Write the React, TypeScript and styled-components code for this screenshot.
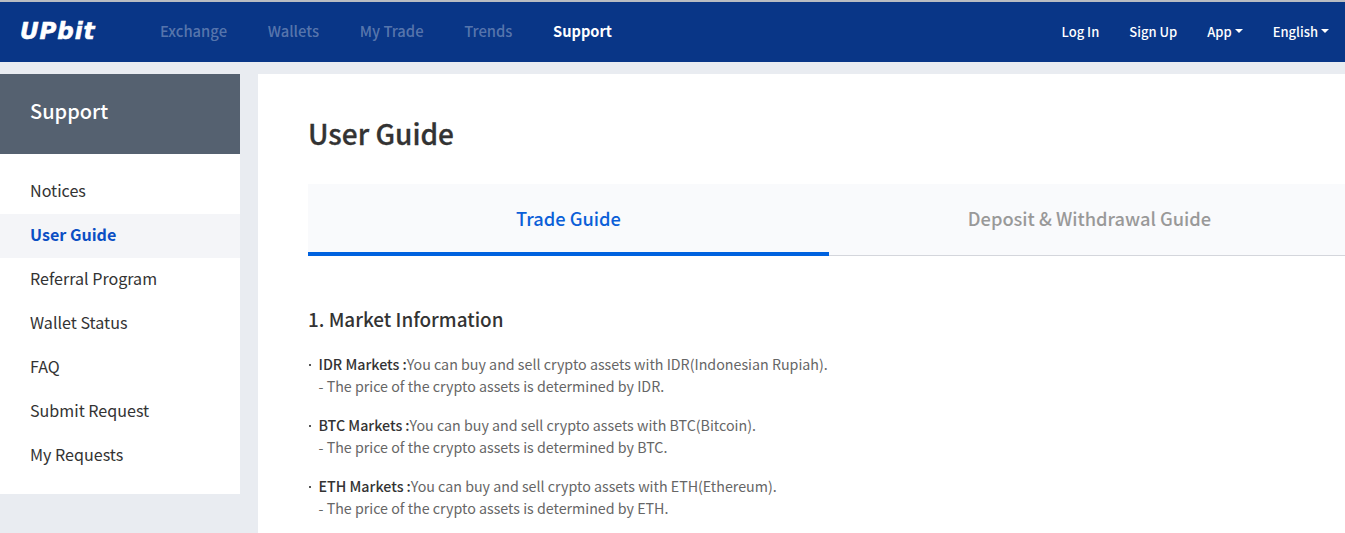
import React from 'react';
import styled, { createGlobalStyle } from 'styled-components';

const GlobalStyle = createGlobalStyle`
  html, body {
    margin: 0;
    padding: 0;
    height: 533px;
    overflow: hidden;
    background: #e9ecf1;
    font-family: "Noto Sans CJK KR", "Noto Sans", sans-serif;
  }
  * { box-sizing: border-box; }
`
const Page = styled.div`
  width: 1345px;
  height: 533px;
  overflow: hidden;
  border-top: 2px solid #b9bcc2;
`
const Header = styled.header`
  height: 60px;
  background: #093687;
  display: flex;
  align-items: center;
  justify-content: space-between;
  padding: 0 16px 2px 20px;
`
const Left = styled.div`
  display: flex;
  align-items: center;
`
const Logo = styled.div`
  width: 140px;
  color: #fff;
  font-family: "DejaVu Sans", sans-serif;
  font-size: 23px;
  font-weight: 700;
  font-style: italic;
  letter-spacing: 0.9px;
  -webkit-text-stroke: 0.6px #fff;
`
const MainNav = styled.nav`
  display: flex;
  gap: 40.7px;
`
const MainLink = styled.a<{ $active?: boolean }>`
  font-size: ${p => (p.$active ? '14.6px' : '14.8px')};
  line-height: 22px;
  font-weight: ${p => (p.$active ? 700 : 500)};
  color: ${p => (p.$active ? '#fff' : 'rgba(255, 255, 255, 0.33)')};
`
const UserNav = styled.nav`
  display: flex;
  align-items: center;
  gap: 30px;
`
const UserLink = styled.a`
  font-size: 13px;
  font-weight: 500;
  color: #fff;
  display: flex;
  align-items: center;
  gap: 3px;
`
const Caret = styled.span`
  width: 0;
  height: 0;
  border-left: 4px solid transparent;
  border-right: 4px solid transparent;
  border-top: 4px solid #fff;
`
const Body = styled.div`
  display: flex;
  align-items: flex-start;
  gap: 18px;
  padding-top: 12px;
`
const Sidebar = styled.aside`
  width: 240px;
  flex: none;
  background: #fff;
`
const SideTitle = styled.div`
  height: 80px;
  background: #556170;
  color: #fff;
  font-size: 20px;
  font-weight: 500;
  line-height: 74px;
  padding-left: 30px;
`
const SideMenu = styled.ul`
  list-style: none;
  margin: 0;
  padding: 16px 0;
`
const SideItem = styled.li<{ $active?: boolean }>`
  height: 44px;
  line-height: 40px;
  padding-left: 30px;
  font-size: 16.1px;
  font-weight: ${p => (p.$active ? 700 : 400)};
  color: ${p => (p.$active ? '#0b4fc4' : '#333')};
  background: ${p => (p.$active ? '#f4f5f8' : 'transparent')};
`
const Main = styled.main`
  width: 1100px;
  flex: none;
  height: 460px;
  background: #fff;
  padding: 0 0 0 50px;
`
const Title = styled.h1`
  margin: 0;
  height: 110px;
  padding-top: 36px;
  font-size: 28px;
  line-height: 46px;
  font-weight: 500;
  -webkit-text-stroke: 0.3px #333;
  color: #333;
`
const Tabs = styled.div`
  display: flex;
  height: 72px;
  background: #f9fafc;
  border-bottom: 1px solid #d4d6dc;
`
const Tab = styled.div<{ $active?: boolean }>`
  width: 521px;
  flex: none;
  height: 72px;
  text-align: center;
  line-height: 68px;
  font-size: 18.25px;
  font-weight: 500;
  color: ${p => (p.$active ? '#0b5fd8' : '#999')};
  border-bottom: ${p => (p.$active ? '4px solid #0062df' : 'none')};
`
const SectionTitle = styled.h2`
  margin: 49px 0 0 0;
  font-size: 18.9px;
  line-height: 28px;
  font-weight: 500;
  color: #333;
`
const MarketList = styled.ul`
  list-style: none;
  margin: 20px 0 0 0;
  padding: 0;
  display: flex;
  flex-direction: column;
  gap: 17px;
`
const MarketItem = styled.li`
  position: relative;
  padding-left: 10.5px;
  font-size: 14.25px;
  line-height: 22px;
  color: #666;
  &::before {
    content: '';
    position: absolute;
    left: 1px;
    top: 11px;
    width: 2px;
    height: 2px;
    background: #555;
  }
`
const Strong = styled.span`
  color: #333;
  font-weight: 500;
`
const Colon = styled.span`
  margin-left: 3px;
`
const Note = styled.div`
  padding-left: 0;
`

const sideItems = ['Notices', 'User Guide', 'Referral Program', 'Wallet Status', 'FAQ', 'Submit Request', 'My Requests'];
const mainLinks = ['Exchange', 'Wallets', 'My Trade', 'Trends', 'Support'];
const markets = [
  { name: 'IDR', text: 'IDR(Indonesian Rupiah)' },
  { name: 'BTC', text: 'BTC(Bitcoin)' },
  { name: 'ETH', text: 'ETH(Ethereum)' },
];

export default function App() {
  return (
    <Page>
      <GlobalStyle />
      <Header>
        <Left>
          <Logo>UPbit</Logo>
          <MainNav>
            {mainLinks.map(x => (
              <MainLink key={x} $active={x === 'Support'}>{x}</MainLink>
            ))}
          </MainNav>
        </Left>
        <UserNav>
          <UserLink>Log In</UserLink>
          <UserLink>Sign Up</UserLink>
          <UserLink>App<Caret /></UserLink>
          <UserLink>English<Caret /></UserLink>
        </UserNav>
      </Header>
      <Body>
        <Sidebar>
          <SideTitle>Support</SideTitle>
          <SideMenu>
            {sideItems.map(x => (
              <SideItem key={x} $active={x === 'User Guide'}>{x}</SideItem>
            ))}
          </SideMenu>
        </Sidebar>
        <Main>
          <Title>User Guide</Title>
          <Tabs>
            <Tab $active>Trade Guide</Tab>
            <Tab>Deposit &amp; Withdrawal Guide</Tab>
          </Tabs>
          <SectionTitle>1. Market Information</SectionTitle>
          <MarketList>
            {markets.map(m => (
              <MarketItem key={m.name}>
                <Strong>{m.name} Markets<Colon>:</Colon></Strong>You can buy and sell crypto assets with {m.text}.
                <Note>- The price of the crypto assets is determined by {m.name}.</Note>
              </MarketItem>
            ))}
          </MarketList>
        </Main>
      </Body>
    </Page>
  );
}
